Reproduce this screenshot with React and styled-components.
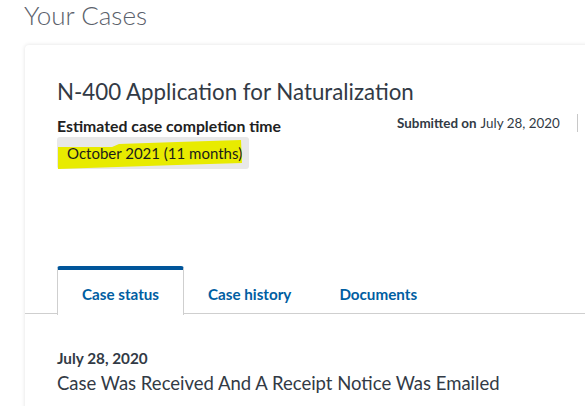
import React from "react";
import styled, { createGlobalStyle } from "styled-components";

const Global = createGlobalStyle`
  html, body { margin: 0; padding: 0; background: #fff; overflow: hidden; }
  body { font-family: Lato, "Open Sans", sans-serif; color: #323a45; }
`;

const Page = styled.div`
  width: 585px;
  height: 406px;
  overflow: hidden;
  position: relative;
`;

const PageTitle = styled.h1`
  margin: 0;
  padding: 0 0 0 24px;
  height: 45px;
  font-weight: 300;
  font-size: 26px;
  line-height: 30px;
  color: #5b616b;
`;

const Card = styled.section`
  margin-left: 25px;
  width: 700px;
  background: #fff;
  border-radius: 4px 0 0 0;
  box-shadow: 0 0 4px rgba(0, 0, 0, 0.12);
  min-height: 400px;
`;

const Header = styled.div`
  padding: 33px 32px 0 32px;
  height: 221px;
  box-sizing: border-box;
`;

const CaseTitle = styled.h2`
  margin: 0;
  font-weight: 400;
  font-size: 22.3px;
  line-height: 28px;
  color: #323a45;
`;

const InfoRow = styled.div`
  display: flex;
  margin-top: 10px;
`;

const Estimate = styled.div`
  width: 340px;
`;

const Label = styled.div`
  font-weight: 700;
  font-size: 15.8px;
  line-height: 19px;
  color: #212121;
`;

const Highlight = styled.div`
  position: relative;
  display: inline-block;
  margin-top: 2px;
  background: #e8e8e8;
  border-radius: 3px;
  padding: 6px 7px 6px 10px;
  font-size: 15px;
  line-height: 20px;
  color: #1b1b1b;
`;

const Marker = styled.svg`
  position: absolute;
  left: 0;
  top: 0;
  width: 186px;
  height: 32px;
`;

const HighlightText = styled.span`
  position: relative;
`;

const Submitted = styled.div`
  display: flex;
  align-items: center;
  align-self: flex-start;
  margin-top: -2px;
  font-size: 13.4px;
  line-height: 18px;
  color: #323a45;
  b { font-weight: 700; margin-right: 4px; }
`;

const Divider = styled.span`
  display: inline-block;
  width: 1px;
  height: 18px;
  background: #c8c8c8;
  margin-left: 17px;
`;

const Tabs = styled.div`
  display: flex;
  padding-left: 32px;
  border-bottom: 1px solid #cfcfcf;
  height: 48px;
  box-sizing: border-box;
`;

const Tab = styled.div`
  box-sizing: border-box;
  height: 49px;
  margin-bottom: -1px;
  padding: 2px 24px 0 24px;
  display: flex;
  align-items: center;
  font-weight: 700;
  font-size: 15.2px;
  color: #005ea2;
  border-radius: 3px 3px 0 0;
  border-top: 4px solid transparent;
  ${(p) =>
    p.$active &&
    `
    border-top-color: #00559a;
    border-left: 1px solid #cfcfcf;
    border-right: 1px solid #cfcfcf;
    background: #fff;
  `}
`;

const Status = styled.div`
  padding: 35px 32px 0 32px;
`;

const StatusDate = styled.div`
  font-weight: 700;
  font-size: 15.3px;
  line-height: 19px;
  color: #323a45;
`;

const StatusText = styled.div`
  font-size: 18.5px;
  line-height: 24px;
  color: #323a45;
  margin-top: 3px;
`;

export default function App() {
  return (
    <Page>
      <Global />
      <PageTitle>Your Cases</PageTitle>
      <Card>
        <Header>
          <CaseTitle>N-400 Application for Naturalization</CaseTitle>
          <InfoRow>
            <Estimate>
              <Label>Estimated case completion time</Label>
              <Highlight>
                <Marker viewBox="0 0 186 32" preserveAspectRatio="none">
                  <polygon
                    points="1,10 55,10 62,7 120,5 184,3 185,26 120,28 60,30 1,32"
                    fill="#e8eb00"
                  />
                </Marker>
                <HighlightText>October 2021 (11 months)</HighlightText>
              </Highlight>
            </Estimate>
            <Submitted>
              <b>Submitted on</b> July 28, 2020
              <Divider />
            </Submitted>
          </InfoRow>
        </Header>
        <Tabs>
          <Tab $active>Case status</Tab>
          <Tab>Case history</Tab>
          <Tab>Documents</Tab>
        </Tabs>
        <Status>
          <StatusDate>July 28, 2020</StatusDate>
          <StatusText>Case Was Received And A Receipt Notice Was Emailed</StatusText>
        </Status>
      </Card>
    </Page>
  );
}
